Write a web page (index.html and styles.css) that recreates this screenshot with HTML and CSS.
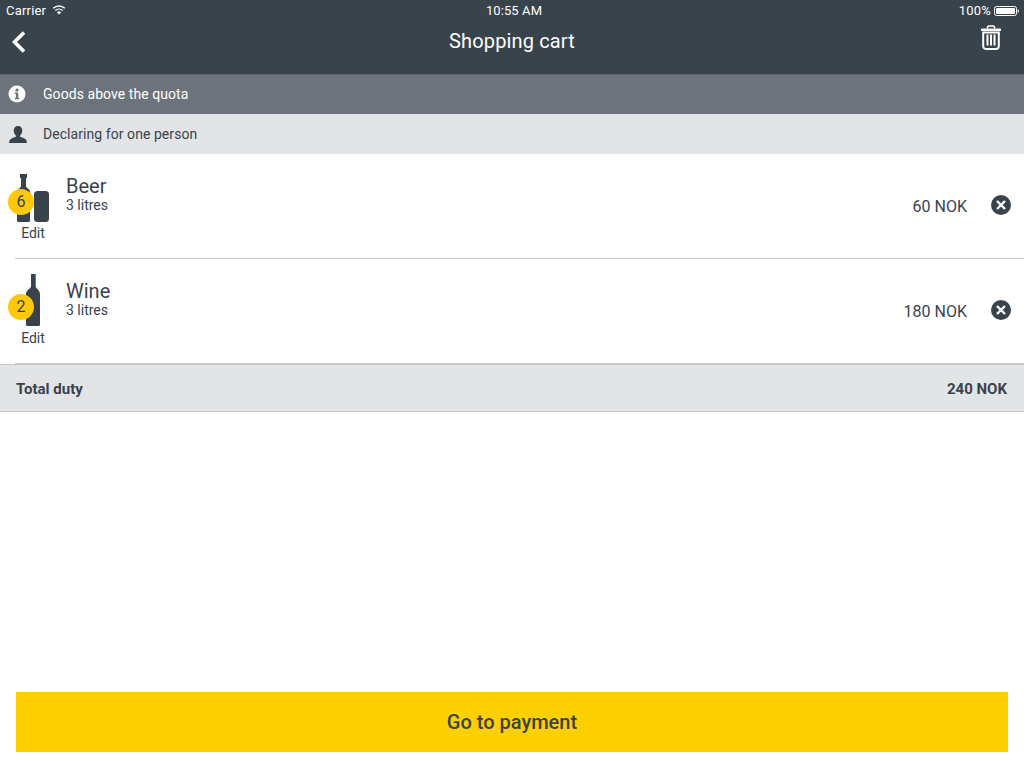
FILE: index.html
```html
<!DOCTYPE html>
<html lang="en">
<head>
<meta charset="utf-8">
<title>Shopping cart</title>
<link rel="stylesheet" href="styles.css">
</head>
<body>
<div class="app">
  <header class="header">
    <div class="status">
      <div class="status-side">
        <span>Carrier</span>
        <svg class="wifi" width="14" height="10" viewBox="0 0 14 10"><path d="M7 9.6 4.9 7.4a3 3 0 0 1 4.2 0z" fill="#fff"/><path d="M3.4 5.6a5.2 5.2 0 0 1 7.2 0M1.2 3.3a8.3 8.3 0 0 1 11.6 0" fill="none" stroke="#fff" stroke-width="1.4"/></svg>
      </div>
      <div class="status-time">10:55 AM</div>
      <div class="status-side status-right">
        <span>100%</span>
        <svg width="25" height="10" viewBox="0 0 25 10"><rect x=".5" y=".5" width="22" height="9" rx="2" fill="none" stroke="#fff" stroke-width="1"/><rect x="2" y="2" width="19" height="6" rx="1" fill="#fff"/><path d="M23.7 3.2c.8.2 1.2.9 1.2 1.8s-.4 1.6-1.2 1.8z" fill="#fff"/></svg>
      </div>
    </div>
    <div class="nav">
      <svg class="back" width="16" height="24" viewBox="0 0 16 24"><path d="M13 2.500 3.500 12l9.500 9.500" fill="none" stroke="#fff" stroke-width="3.600"/></svg>
      <h1 class="title">Shopping cart</h1>
      <svg class="trash" width="20" height="25" viewBox="0 0 20 25"><path d="M6.500 3.200V2.200C6.500 1.300 7.200 1 8 1h4c.8 0 1.500.3 1.500 1.200v1" fill="none" stroke="#fff" stroke-width="1.600"/><path d="M1 3.500h18c.6 0 1 .5 1 1V6H0V4.500c0-.5.4-1 1-1z" fill="#fff"/><path d="M2.200 7.500h15.600V21c0 1.800-1 3-2.800 3H5c-1.800 0-2.800-1.200-2.800-3z" fill="none" stroke="#fff" stroke-width="2"/><path d="M6.500 9.500v11M10 9.500v11M13.500 9.500v11" stroke="#fff" stroke-width="2"/></svg>
    </div>
  </header>

  <div class="bar bar-info">
    <svg class="bar-icon" width="18" height="18" viewBox="0 0 18 18"><circle cx="9" cy="9" r="8.500" fill="#fff"/><circle cx="9" cy="5" r="1.600" fill="#6c737a"/><path d="M6.800 7.400h3.400v5.400h1.100v1.500H6.800v-1.500h1.100V8.900H6.800z" fill="#6c737a"/></svg>
    <span>Goods above the quota</span>
  </div>
  <div class="bar bar-person">
    <svg class="bar-icon" width="18" height="17" viewBox="0 0 18 17"><path d="M9 0c2.700 0 4.300 1.900 4.300 4.600 0 2-.9 3.900-2.200 4.900v1.300c2.500.8 5.700 1.700 6.400 3.700.2.800.4 1.600.5 2.500H0c.1-.9.300-1.700.5-2.500.7-2 3.900-2.900 6.400-3.700V9.500C5.600 8.500 4.700 6.600 4.700 4.600 4.700 1.900 6.300 0 9 0z" fill="#39434c"/></svg>
    <span>Declaring for one person</span>
  </div>

  <div class="item">
    <div class="thumb">
      <div class="pic">
        <svg class="art" width="36" height="55" viewBox="0 0 36 55"><path d="M5 5h7v4h-1v8c0 2 4 3 4 6v28.500a1.500 1.500 0 0 1-1.500 1.500h-10A1.500 1.500 0 0 1 2 51.500V23c0-3 4-4 4-6V9H5z" fill="#39434c"/><rect x="19" y="22" width="15" height="31" rx="3.500" fill="#39434c"/></svg>
        <span class="badge">6</span>
      </div>
      <span class="edit">Edit</span>
    </div>
    <div class="info">
      <div class="name">Beer</div>
      <div class="qty">3 litres</div>
    </div>
    <div class="price">60 NOK</div>
    <svg class="remove" width="20" height="20" viewBox="0 0 20 20"><circle cx="10" cy="10" r="10" fill="#39434c"/><path d="m6 6 8 8m0-8-8 8" stroke="#fff" stroke-width="2.400"/></svg>
  </div>

  <div class="item">
    <div class="thumb">
      <div class="pic">
        <svg class="art" width="36" height="55" viewBox="0 0 36 55"><path d="M16 0h4.700v12c0 3 4.300 3.500 4.300 8.500V50.500a1.500 1.500 0 0 1-1.500 1.500h-11a1.500 1.500 0 0 1-1.500-1.500V20.500c0-5 5-5.500 5-8.500z" fill="#39434c"/></svg>
        <span class="badge">2</span>
      </div>
      <span class="edit">Edit</span>
    </div>
    <div class="info">
      <div class="name">Wine</div>
      <div class="qty">3 litres</div>
    </div>
    <div class="price">180 NOK</div>
    <svg class="remove" width="20" height="20" viewBox="0 0 20 20"><circle cx="10" cy="10" r="10" fill="#39434c"/><path d="m6 6 8 8m0-8-8 8" stroke="#fff" stroke-width="2.400"/></svg>
  </div>

  <div class="total">
    <span>Total duty</span>
    <span>240 NOK</span>
  </div>

  <div class="spacer"></div>

  <button class="pay" type="button">Go to payment</button>
</div>
</body>
</html>
```
FILE: styles.css
```css
* { box-sizing: border-box; }
html, body { margin: 0; height: 100%; }
body { font-family: Roboto, "Liberation Sans", sans-serif; color: #39434c; background: #fff; }
.app { height: 768px; display: flex; flex-direction: column; overflow: hidden; }

.header { height: 75px; background: #39434c; border-bottom: 1px solid #5b646c; color: #fff; flex: none; }
.status { height: 21px; padding: 0 5px 0 6px; display: grid; grid-template-columns: 1fr auto 1fr; align-items: center; font-size: 13px; letter-spacing: .2px; }
.status-side { display: flex; align-items: center; gap: 6px; }
.status-right { justify-content: flex-end; gap: 3px; }
.status-time { padding-left: 3px; letter-spacing: .1px; }
.wifi { margin-top: -2px; }
.nav { height: 41px; padding: 0 23px 0 11px; display: flex; align-items: center; justify-content: space-between; position: relative; }
.title { position: absolute; left: 0; right: 0; top: 8px; margin: 0; text-align: center; font-size: 20px; line-height: 24px; font-weight: 400; letter-spacing: .15px; }
.trash { margin-top: -8px; }

.bar { display: flex; align-items: center; flex: none; font-size: 14px; letter-spacing: .06px; padding-left: 8px; }
.bar-icon { width: 18px; margin-right: 17px; flex: none; }
.bar-info { height: 39px; padding-bottom: 1px; background: #6c737a; color: #fff; }
.bar-person { height: 40px; background: #e3e4e6; }
.bar-person .bar-icon { margin-left: 1px; margin-right: 16px; margin-top: 1px; }

.item { height: 105px; margin-left: 15px; padding: 15px 13px 0 0; border-bottom: 1px solid #c6c7c9; display: flex; align-items: flex-start; flex: none; }
.thumb { width: 36px; display: flex; flex-direction: column; align-items: center; flex: none; }
.pic { position: relative; width: 36px; height: 55px; }
.art { display: block; }
.badge { position: absolute; left: -7px; top: 20px; width: 26px; height: 26px; border-radius: 50%; background: #ffc90b; font-size: 16px; line-height: 26px; text-align: center; }
.edit { font-size: 14px; line-height: 18px; }
.info { margin: 5px 0 0 15px; flex: 1; }
.name { font-size: 20px; line-height: 24px; }
.qty { font-size: 14px; line-height: 14px; }
.price { font-size: 16px; line-height: 20px; margin: 28px 24px 0 0; }
.remove { margin-top: 26px; flex: none; }

.total { height: 48px; padding: 1px 17px 0 16px; background: #e3e4e6; border-top: 1px solid #c6c7c9; border-bottom: 1px solid #c6c7c9; display: flex; align-items: center; justify-content: space-between; font-size: 15px; font-weight: 700; flex: none; }

.spacer { flex: 1; }
.pay { flex: none; height: 60px; margin: 0 16px 16px; border: 0; background: #ffd000; color: #39434c; font-family: inherit; font-size: 20px; font-weight: 500; }
```
